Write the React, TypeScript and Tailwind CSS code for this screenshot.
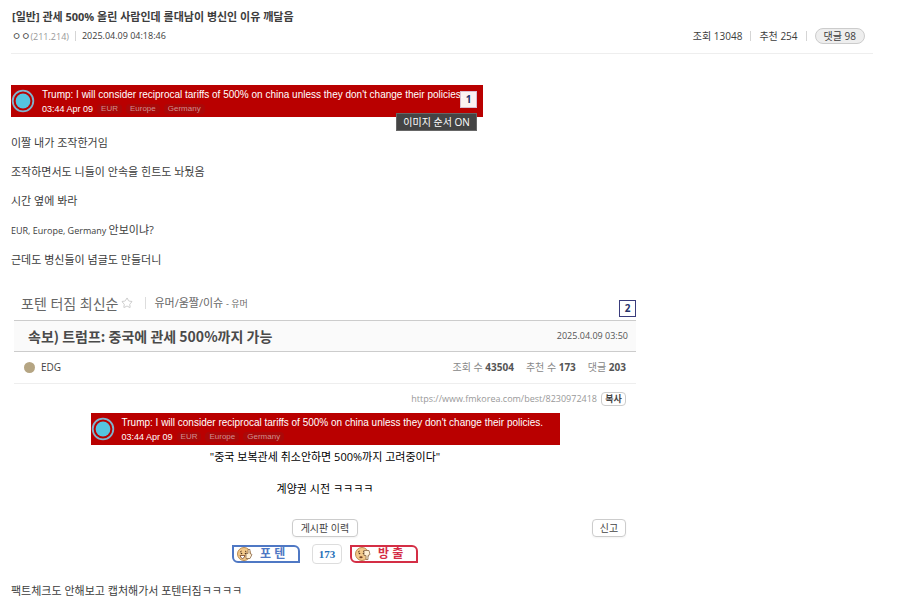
import { Star } from "lucide-react";

const regions = ["EUR", "Europe", "Germany"];

const paragraphs = [
  { text: "이짤 내가 조작한거임" },
  { text: "조작하면서도 니들이 안속을 힌트도 놔뒀음" },
  { text: "시간 옆에 봐라" },
  { latin: "EUR, Europe, Germany ", text: "안보이냐?" },
  { text: "근데도 병신들이 념글도 만들더니" },
];

function NewsBanner() {
  return (
    <div className="flex h-8 items-center bg-[#b90000] font-['Liberation_Sans',sans-serif] text-white">
      <svg viewBox="0 0 24 24" className="h-6 w-6 shrink-0">
        <circle cx="12" cy="12" r="10.3" fill="none" stroke="#7fb4cf" strokeWidth="1.8" />
        <circle cx="12" cy="12" r="7.4" fill="#55c4e0" />
      </svg>
      <div className="ml-[7px]">
        <p className="whitespace-nowrap text-[10px] leading-[15px]">
          Trump: I will consider reciprocal tariffs of 500% on china unless they don't change their policies.
        </p>
        <div className="flex items-center gap-1 text-[9px] leading-[14px]">
          <span>03:44 Apr 09</span>
          {regions.map((r) => (
            <span key={r} className="rounded-sm bg-[#aa0808] px-1 text-[8px] leading-[10px] text-[#d09090]">{r}</span>
          ))}
        </div>
      </div>
    </div>
  );
}

function ImageNumber({ n }: { n: number }) {
  return (
    <span className={`flex h-[17px] w-[17px] items-center justify-center border bg-white/95 text-[10px] font-bold text-[#28336b] ${n === 1 ? "border-[#d8c0d4]" : "border-[#3a3c7c]"}`}>
      {n}
    </span>
  );
}

function Face({ down }: { down?: boolean }) {
  return (
    <svg viewBox="0 0 18 16" className="h-4 w-[18px]">
      <circle cx="8" cy="8" r="6.5" fill="#f3c98a" stroke="#a87332" strokeWidth=".8" />
      <path d="M4 6.2 5.7 5M9 5l1.5 1" stroke="#5d3b20" fill="none" />
      <circle cx="5.5" cy="7.5" r=".8" fill="#49301d" />
      <circle cx="9.5" cy="7.5" r=".8" fill="#49301d" />
      {down ? (
        <>
          <ellipse cx="7" cy="11.2" rx="1.7" ry="1" fill="#764225" />
          <path d="M10 4.5h5l1 4-2 1v4h-2v-4h-2z" fill="#fff0d4" stroke="#8b6a4b" strokeWidth=".8" />
        </>
      ) : (
        <>
          <path d="M4 9.5h5q-1 3-2.5 3T4 9.5" fill="#fff" stroke="#764225" strokeWidth=".8" />
          <path d="M10 12.5h4l2-4-2-1v-4h-2v4h-2z" fill="#fff0d4" stroke="#8b6a4b" strokeWidth=".8" />
        </>
      )}
    </svg>
  );
}

function Divider() {
  return <span className="h-2.5 w-px bg-[#d5d5d5]" />;
}

export default function App() {
  return (
    <main className="min-h-screen bg-white px-[11px] pt-2 font-['Open_Sans','Noto_Sans_CJK_KR',sans-serif] text-[#3c3c3c]">
      <header className="mr-4 border-b border-[#eee] pb-[7px]">
        <h1 className="px-px text-[11px] font-bold leading-[18px]">
          [일반] 관세 500% 올린 사람인데 롤대남이 병신인 이유 깨달음
        </h1>
        <div className="flex h-5 items-center justify-between pl-px pr-2 text-[10px]">
          <div className="flex items-center gap-1.5">
            <span>ㅇㅇ<span className="text-[9px] text-[#999]">(211.214)</span></span>
            <Divider />
            <time className="text-[9px]">2025.04.09 04:18:46</time>
          </div>
          <div className="flex items-center gap-2">
            <span>조회 13048</span>
            <Divider />
            <span>추천 254</span>
            <Divider />
            <a href="#comments" className="flex h-4 items-center rounded-full border border-[#ccc] bg-[#eee] px-2">댓글 98</a>
          </div>
        </div>
      </header>

      <article className="pt-[31px]">
        <div className="relative w-[472px]">
          <NewsBanner />
          <div className="absolute right-1.5 top-1.5"><ImageNumber n={1} /></div>
          <span className="absolute right-1.5 top-7 flex h-[18px] w-[81px] items-center justify-center border border-[#666] bg-[#444] text-[10px] text-white">
            이미지 순서 ON
          </span>
        </div>

        <div className="pt-[11px] text-[11px] leading-[29px]">
          {paragraphs.map((p) => (
            <p key={p.text}>
              {p.latin && <span className="text-[9px]">{p.latin}</span>}
              {p.text}
            </p>
          ))}
        </div>

        <section className="relative ml-[3px] mt-3 w-[622px]">
          <div className="absolute right-0 top-3.5"><ImageNumber n={2} /></div>
          <div className="flex h-[35px] items-center border-b border-[#ccc] pl-[7px] text-[#666]">
            <span className="text-[14px]">포텐 터짐 최신순</span>
            <Star className="ml-[3px] h-3 w-3 text-[#bbb]" strokeWidth={1.5} />
            <span className="ml-3 mr-2 h-3 w-px bg-[#ddd]" />
            <span className="text-[11px]">유머/움짤/이슈 <span className="text-[9px]">- 유머</span></span>
          </div>
          <div className="flex h-[31px] items-center justify-between border-b border-[#ccc] bg-[#fafafa] pl-3.5 pr-2">
            <h2 className="font-['Noto_Sans_CJK_KR',sans-serif] text-[14px] font-bold leading-5 text-[#4a4a4a]">속보) 트럼프: 중국에 관세 500%까지 가능</h2>
            <time className="text-[9px] text-[#555]">2025.04.09 03:50</time>
          </div>
          <div className="flex h-8 items-center justify-between border-b border-[#eee] pl-2.5 pr-2.5 text-[10px]">
            <div className="flex items-center gap-1.5">
              <span className="h-[11px] w-[11px] rounded-full bg-[#b5a583]" />
              <span className="text-[#444]">EDG</span>
            </div>
            <div className="flex gap-3 text-[#888]">
              <span>조회 수 <b className="text-[#555]">43504</b></span>
              <span>추천 수 <b className="text-[#555]">173</b></span>
              <span>댓글 <b className="text-[#555]">203</b></span>
            </div>
          </div>
          <div className="flex h-[29px] items-center justify-end gap-1 pr-2.5 text-[9px] text-[#999]">
            <a href="#best">https://www.fmkorea.com/best/8230972418</a>
            <button className="h-3.5 w-[25px] rounded-sm border border-[#ccc] text-[9px] font-bold leading-3 text-[#444]">복사</button>
          </div>
          <div className="mx-auto w-[469px]"><NewsBanner /></div>
          <div className="text-center text-[11px] text-black">
            <p className="leading-6">"중국 보복관세 취소안하면 500%까지 고려중이다"</p>
            <p className="pt-2 leading-6">계양권 시전 ㅋㅋㅋㅋ</p>
          </div>
          <div className="mt-[18px] grid grid-cols-3 items-center px-2.5 text-[10px] text-[#444]">
            <button className="col-start-2 h-[18px] w-[66px] justify-self-center rounded-sm border border-[#ccc] shadow-xs">게시판 이력</button>
            <button className="h-[18px] w-[34px] justify-self-end rounded-sm border border-[#ccc] shadow-xs">신고</button>
          </div>
          <div className="mt-[7px] flex items-center justify-center gap-2">
            <button className="mr-1 flex h-[18px] w-[68px] items-center gap-1.5 rounded-bl-md rounded-tr-md border-2 border-[#4f78c4] pl-0.5 text-[12px] font-bold text-[#4f78c4]">
              <Face />포 텐
            </button>
            <span className="flex h-5 w-[30px] items-center justify-center rounded-sm border border-[#ddd] font-['Liberation_Serif',serif] text-[11px] font-bold text-[#2670b8]">173</span>
            <button className="flex h-[18px] w-[68px] items-center gap-1.5 rounded-bl-md rounded-tr-md border-2 border-[#d42e45] pl-0.5 text-[12px] font-bold text-[#d42e45]">
              <Face down />방 출
            </button>
          </div>
        </section>

        <p className="mt-3 text-[11px] leading-[29px]">팩트체크도 안해보고 캡처해가서 포텐터짐ㅋㅋㅋㅋ</p>
      </article>
    </main>
  );
}
